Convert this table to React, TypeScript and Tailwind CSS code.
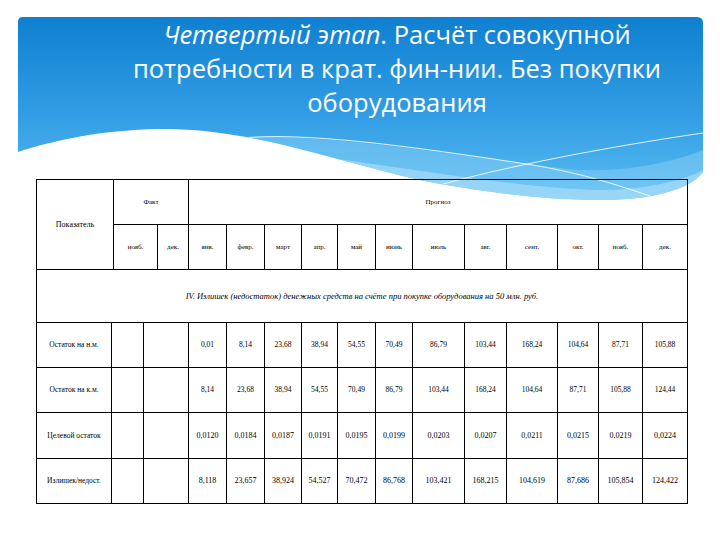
import React from "react";

const serif = { fontFamily: '"Liberation Serif", "Times New Roman", serif' };

const headTpl =
  "grid grid-cols-[77px_44px_31px_38px_38px_37px_36px_38px_37px_52px_42px_51px_41px_44px_45px]";
const dataTpl =
  "grid grid-cols-[75px_32px_45px_38px_38px_37px_36px_38px_37px_52px_42px_51px_41px_44px_45px]";

const months = ["янв.", "февр.", "март", "апр.", "май", "июнь", "июль", "авг.", "сент.", "окт.", "нояб.", "дек."];

const rows: { label: string; vals: string[]; big?: boolean }[] = [
  { label: "Остаток на н.м.", vals: ["0,01", "8,14", "23,68", "38,94", "54,55", "70,49", "86,79", "103,44", "168,24", "104,64", "87,71", "105,88"] },
  { label: "Остаток на к.м.", vals: ["8,14", "23,68", "38,94", "54,55", "70,49", "86,79", "103,44", "168,24", "104,64", "87,71", "105,88", "124,44"] },
  { label: "Целевой остаток", vals: ["0,0120", "0,0184", "0,0187", "0,0191", "0,0195", "0,0199", "0,0203", "0,0207", "0,0211", "0,0215", "0,0219", "0,0224"], big: true },
  { label: "Излишек/недост.", vals: ["8,118", "23,657", "38,924", "54,527", "70,472", "86,768", "103,421", "168,215", "104,619", "87,686", "105,854", "124,422"], big: true },
];

function Background() {
  const panel =
    "M18,22 Q18,17 23,17 L697,17 Q703,17 703,23 L703,172 C690,190 650,200 600,200 C540,200 470,190 420,180 C330,160 250,128 160,129 C90,130 40,145 18,152 Z";
  return (
    <svg className="absolute left-0 top-0" width="720" height="215" viewBox="0 0 720 215">
      <defs>
        <linearGradient id="bg" x1="0" y1="0" x2="0" y2="1">
          <stop offset="0" stopColor="#0f80d0" />
          <stop offset="0.5" stopColor="#2f9be3" />
          <stop offset="1" stopColor="#5abcf2" />
        </linearGradient>
        <clipPath id="pc">
          <path d={panel} />
        </clipPath>
      </defs>
      <path d={panel} fill="url(#bg)" />
      <g clipPath="url(#pc)">
        <path d="M200,140 C300,128 430,152 560,168 C620,176 680,160 703,150 L703,215 L200,215 Z" fill="#8fd2f7" opacity="0.45" />
        <path d="M330,158 C420,170 520,188 600,190 C650,190 690,178 703,170 L703,215 L330,215 Z" fill="#b8e4fa" opacity="0.55" />
        <path d="M233,139 C300,130 420,148 520,163 C580,172 620,186 650,196" stroke="#ffffff" strokeWidth="1" fill="none" opacity="0.85" />
        <path d="M440,185 C500,168 600,148 703,133" stroke="#ffffff" strokeWidth="1" fill="none" opacity="0.85" />
      </g>
    </svg>
  );
}

export default function App() {
  const cell = "border-r border-b border-black flex items-center justify-center text-center";
  return (
    <div className="relative w-[720px] h-[540px] bg-white overflow-hidden">
      <Background />
      <div className="relative">
        <div
          className="pt-[17px] pl-[90px] pr-[16px] text-center text-white text-[25.5px] leading-[34px]"
          style={{ fontFamily: '"Open Sans", "Noto Sans", sans-serif' }}
        >
          <div>
            <span className="italic">Четвертый этап</span>. Расчёт совокупной
          </div>
          <div>потребности в крат. фин-нии. Без покупки</div>
          <div>оборудования</div>
        </div>

        <div className="mt-[60px] ml-[36px] w-[652px] border-l border-t border-black text-black text-[7px] leading-none" style={serif}>
          <div className={`${headTpl} grid-rows-[45px_45px]`}>
            <div className={`${cell} row-span-2 text-[8px]`}>Показатель</div>
            <div className={`${cell} col-span-2`}>Факт</div>
            <div className={`${cell} col-span-12`}>Прогноз</div>
            <div className={cell}>нояб.</div>
            <div className={cell}>дек.</div>
            {months.map((m, i) => (
              <div key={i} className={cell}>
                {m}
              </div>
            ))}
          </div>
          <div className={`${cell} h-[53px] italic text-[8.5px]`}>
            IV. Излишек (недостаток) денежных средств на счёте при покупке оборудования на 50 млн. руб.
          </div>
          {rows.map((r, i) => (
            <div key={i} className={`${dataTpl} ${i === 2 ? "h-[46px]" : "h-[45px]"}`}>
              <div className={`${cell} text-[7.5px]`}>{r.label}</div>
              <div className={cell}></div>
              <div className={cell}></div>
              {r.vals.map((v, j) => (
                <div key={j} className={`${cell} ${r.big ? "text-[8px]" : "text-[7.5px]"}`}>
                  {v}
                </div>
              ))}
            </div>
          ))}
        </div>
      </div>
    </div>
  );
}
